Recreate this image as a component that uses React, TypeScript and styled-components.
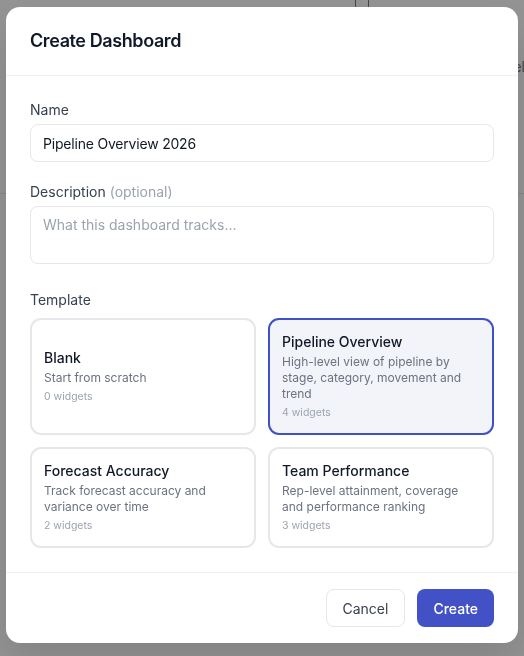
import { useState } from 'react';
import styled, { createGlobalStyle } from 'styled-components';

type Template = {
  id: string;
  name: string;
  description: string;
  widgets: number;
};

const templates: Template[] = [
  { id: 'blank', name: 'Blank', description: 'Start from scratch', widgets: 0 },
  {
    id: 'pipeline',
    name: 'Pipeline Overview',
    description: 'High-level view of pipeline by stage, category, movement and trend',
    widgets: 4,
  },
  {
    id: 'forecast',
    name: 'Forecast Accuracy',
    description: 'Track forecast accuracy and variance over time',
    widgets: 2,
  },
  {
    id: 'team',
    name: 'Team Performance',
    description: 'Rep-level attainment, coverage and performance ranking',
    widgets: 3,
  },
];

const App = (): JSX.Element => {
  const [name, setName] = useState<string>('Pipeline Overview 2026');
  const [description, setDescription] = useState<string>('');
  const [selected, setSelected] = useState<string>('pipeline');

  return (
    <>
      <GlobalStyle />
      {/* page behind the dialog, mostly hidden by the backdrop */}
      <Page>
        <PageTop>
          <ToolbarDot />
          <PageLabel>Model</PageLabel>
        </PageTop>
      </Page>
      <Backdrop>
        <Modal>
          <Header>
            <Title>Create Dashboard</Title>
          </Header>
          <Body>
            <Field>
              <Label>Name</Label>
              <TextInput value={name} onChange={(event) => setName(event.target.value)} />
            </Field>
            <Field>
              <Label>
                Description <Optional>(optional)</Optional>
              </Label>
              <TextArea
                placeholder="What this dashboard tracks..."
                value={description}
                onChange={(event) => setDescription(event.target.value)}
              />
            </Field>
            <TemplateField>
              <Label>Template</Label>
              <TemplateGrid>
                {templates.map((template) => (
                  <TemplateCard
                    key={template.id}
                    $active={selected === template.id}
                    onClick={() => setSelected(template.id)}
                  >
                    <CardTitle>{template.name}</CardTitle>
                    <CardText>{template.description}</CardText>
                    <CardMeta>{template.widgets} widgets</CardMeta>
                  </TemplateCard>
                ))}
              </TemplateGrid>
            </TemplateField>
          </Body>
          <Footer>
            <CancelBtn>Cancel</CancelBtn>
            <CreateBtn>Create</CreateBtn>
          </Footer>
        </Modal>
      </Backdrop>
    </>
  );
};

const GlobalStyle = createGlobalStyle`
  * {
    box-sizing: border-box;
  }
  body {
    margin: 0;
    background: #ffffff;
    font-family: Inter, 'Noto Sans', sans-serif;
    -webkit-font-smoothing: antialiased;
  }
`;

const Page = styled.div`
  height: 656px;
  background: #ffffff;
`;
const PageTop = styled.div`
  height: 194px;
  border-bottom: 1px solid #e5e7eb;
  display: flex;
  justify-content: flex-end;
  align-items: flex-start;
  gap: 115px;
`;
const ToolbarDot = styled.div`
  width: 14px;
  height: 14px;
  margin-top: -4px;
  border: 1.5px solid #6b7280;
  border-radius: 4px;
`;
const PageLabel = styled.div`
  margin-top: 58px;
  margin-right: -1px;
  font-size: 14px;
  color: #6b7280;
`;

const Backdrop = styled.div`
  position: fixed;
  inset: 0;
  background: rgba(17, 17, 17, 0.45);
  display: flex;
  justify-content: center;
  align-items: flex-start;
  padding: 7px 6px;
`;
const Modal = styled.div`
  width: 512px;
  background: #ffffff;
  border-radius: 14px;
  box-shadow: 0 20px 40px rgba(0, 0, 0, 0.12);
  display: flex;
  flex-direction: column;
`;
const Header = styled.div`
  padding: 22px 24px;
  border-bottom: 1px solid #f0f1f3;
`;
const Title = styled.h2`
  margin: 0;
  font-size: 18px;
  line-height: 24px;
  font-weight: 600;
  letter-spacing: -0.4px;
  color: #111827;
`;
const Body = styled.div`
  padding: 24px;
  display: flex;
  flex-direction: column;
  gap: 20px;
`;
const Field = styled.div`
  display: flex;
  flex-direction: column;
  gap: 4px;
`;
const TemplateField = styled(Field)`
  margin-top: 6px;
  gap: 8px;
`;
const Label = styled.label`
  font-size: 14px;
  line-height: 20px;
  color: #374151;
`;
const Optional = styled.span`
  color: #9ca3af;
`;
const TextInput = styled.input`
  height: 38px;
  padding: 0 12px;
  border: 1px solid #e5e7eb;
  border-radius: 8px;
  font-family: inherit;
  font-size: 14px;
  letter-spacing: -0.2px;
  color: #111827;
  outline: none;
`;
const TextArea = styled.textarea`
  display: block;
  height: 58px;
  padding: 8px 12px;
  border: 1px solid #e5e7eb;
  border-radius: 8px;
  font-family: inherit;
  font-size: 14px;
  line-height: 20px;
  color: #111827;
  resize: none;
  outline: none;
  &::placeholder {
    color: #9ca3af;
  }
`;
const TemplateGrid = styled.div`
  display: grid;
  grid-template-columns: 1fr 1fr;
  gap: 12px;
`;
const TemplateCard = styled.div<{ $active: boolean }>`
  min-height: 100px;
  padding: 12px;
  border: 2px solid ${(props) => (props.$active ? '#3f51c6' : '#e5e7eb')};
  background: ${(props) => (props.$active ? '#f3f4f9' : '#ffffff')};
  border-radius: 11px;
  display: flex;
  flex-direction: column;
  justify-content: center;
  cursor: pointer;
`;
const CardTitle = styled.div`
  font-size: 14px;
  line-height: 20px;
  font-weight: 500;
  color: #111827;
`;
const CardText = styled.div`
  margin-top: 2px;
  font-size: 12px;
  line-height: 16px;
  color: #6b7280;
`;
const CardMeta = styled.div`
  margin-top: 3px;
  font-size: 10.5px;
  line-height: 16px;
  color: #9ca3af;
`;
const Footer = styled.div`
  padding: 16px 24px;
  border-top: 1px solid #f0f1f3;
  display: flex;
  justify-content: flex-end;
  gap: 12px;
`;
const CancelBtn = styled.button`
  height: 38px;
  padding: 0 16px;
  border: 1px solid #e5e7eb;
  border-radius: 8px;
  background: #ffffff;
  font-family: inherit;
  font-size: 14px;
  color: #374151;
`;
const CreateBtn = styled.button`
  height: 38px;
  padding: 0 16px;
  border: none;
  border-radius: 8px;
  background: #4252c6;
  font-family: inherit;
  font-size: 14px;
  font-weight: 500;
  color: #ffffff;
`;

export default App;
